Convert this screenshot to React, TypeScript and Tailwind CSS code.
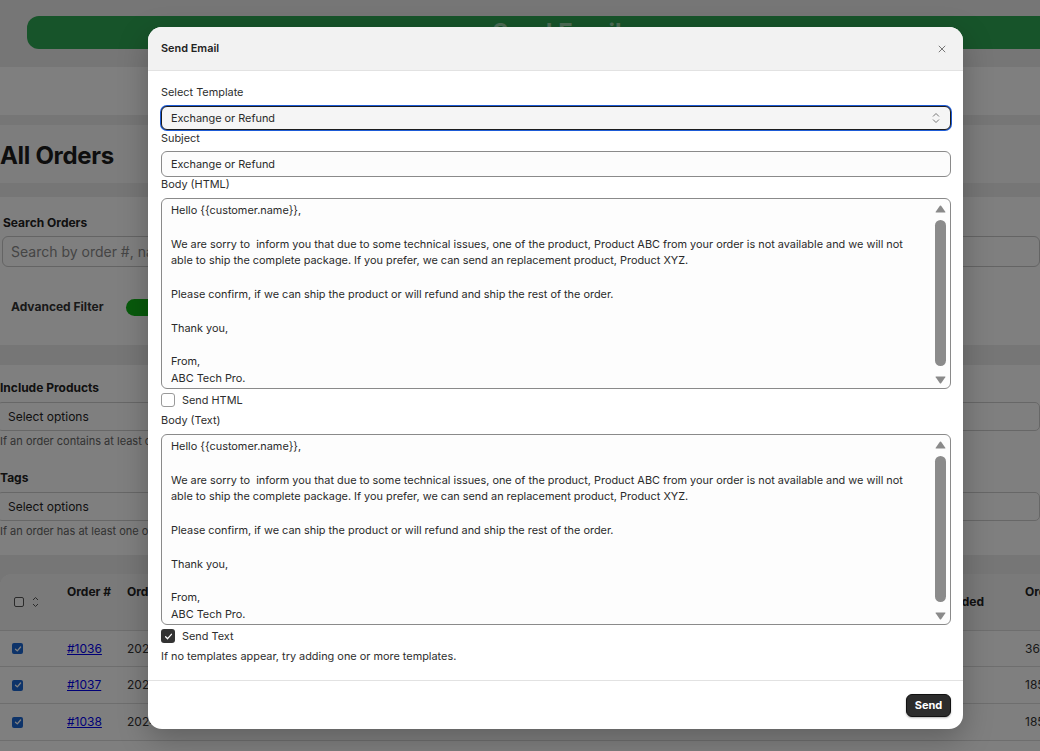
import React from "react";

const BODY = `Hello {{customer.name}},

We are sorry to  inform you that due to some technical issues, one of the product, Product ABC from your order is not available and we will not
able to ship the complete package. If you prefer, we can send an replacement product, Product XYZ.

Please confirm, if we can ship the product or will refund and ship the rest of the order.

Thank you,

From,
ABC Tech Pro.`;

function Tri({ down }: { down?: boolean }) {
  return (
    <svg width="11" height="8" viewBox="0 0 11 8" className="block">
      {down ? (
        <path d="M1 0.5 H10 Q10.8 0.5 10.3 1.3 L6.1 7.2 Q5.5 8 4.9 7.2 L0.7 1.3 Q0.2 0.5 1 0.5Z" fill="#8a8a8a" />
      ) : (
        <path d="M1 7.5 H10 Q10.8 7.5 10.3 6.7 L6.1 0.8 Q5.5 0 4.9 0.8 L0.7 6.7 Q0.2 7.5 1 7.5Z" fill="#8a8a8a" />
      )}
    </svg>
  );
}

function BodyBox() {
  return (
    <div className="flex h-[191px] overflow-hidden rounded-[6px] border border-[#8a8a8a] bg-[#fdfdfd]">
      <textarea
        readOnly
        wrap="off"
        value={BODY}
        className="flex-1 resize-none overflow-hidden bg-transparent pl-[9px] pt-[3px] text-[10.9px] leading-[16.8px] text-[#2a2a2a] outline-none"
      />
      <div className="mr-[3px] flex w-[13px] flex-col items-center pt-[6px] pb-[4px]">
        <Tri />
        <div className="mt-[7px] mb-[10px] w-[11px] flex-1 rounded-full bg-[#8b8b8b]" />
        <Tri down />
      </div>
    </div>
  );
}

function Check({ checked }: { checked?: boolean }) {
  return checked ? (
    <div className="flex h-[14px] w-[14px] items-center justify-center rounded-[3px] bg-[#333333]">
      <svg width="9" height="9" viewBox="0 0 9 9">
        <path d="M1.6 4.8 L3.6 6.7 L7.4 2.3" stroke="white" strokeWidth="1.3" fill="none" strokeLinecap="round" strokeLinejoin="round" />
      </svg>
    </div>
  ) : (
    <div className="h-[14px] w-[14px] rounded-[3px] border border-[#9a9a9a] bg-white" />
  );
}

function SmallBox({ checked }: { checked?: boolean }) {
  return checked ? (
    <div className="flex h-[11px] w-[11px] items-center justify-center rounded-[2px] bg-[#1a66d2]">
      <svg width="8" height="8" viewBox="0 0 8 8">
        <path d="M1.5 4.2 L3.3 5.9 L6.6 2" stroke="white" strokeWidth="1.3" fill="none" strokeLinecap="round" strokeLinejoin="round" />
      </svg>
    </div>
  ) : (
    <div className="h-[10px] w-[10px] rounded-[2px] border border-[#555] bg-white" />
  );
}

function Label({ children, className = "" }: { children: React.ReactNode; className?: string }) {
  return <div className={`h-[15px] text-[10.9px] leading-[15px] text-[#2e2e2e] ${className}`}>{children}</div>;
}

function Row({ id, right, h }: { id: string; right: string; h: string }) {
  return (
    <div className={`flex items-center border-b border-[#dcdcdc] text-[12px] text-[#333] ${h}`}>
      <div className="w-[67px] pl-[12px]">
        <SmallBox checked />
      </div>
      <div className="w-[60px]">
        <a href="#" className="text-[#0000ee] underline">
          {id}
        </a>
      </div>
      <div className="flex-1">2024-10-12</div>
      <div className="w-[95px]">No</div>
      <div className="w-[15px] shrink-0 whitespace-nowrap">{right}</div>
    </div>
  );
}

export default function App() {
  return (
    <div className="relative h-[751px] w-[1040px] overflow-hidden bg-[#ececec] font-['Inter',sans-serif]">
      {/* background page */}
      <div className="flex flex-col">
        <div className="pt-[16px]">
          <div className="ml-[27px] flex h-[33px] w-[1060px] items-start justify-center rounded-[12px] bg-[#2ea854] pt-[3px]">
            <span className="text-[24px] font-bold leading-[28px] text-[#9ad8ab]">Send Email</span>
          </div>
        </div>
        <div className="mt-[18px] h-[48px] bg-white" />
        <div className="mt-[10px] flex h-[58px] items-center bg-[#fafafa] pt-[3px]">
          <h1 className="text-[24px] font-bold tracking-[-0.3px] text-[#1c1c1c]">All Orders</h1>
        </div>
        <div className="mt-[14px] h-[148px] bg-white pt-[19px]">
          <div className="pl-[3px] text-[12px] font-bold leading-[14px] text-[#222]">Search Orders</div>
          <div className="ml-[2px] mt-[6px] flex h-[31px] items-center rounded-[6px] border border-[#c8c8c8] bg-white pl-[8px] text-[14px] text-[#8a8a8a]">
            Search by order #, name, email
          </div>
          <div className="mt-[31px] flex items-center pl-[11px]">
            <span className="w-[115px] text-[12px] font-bold text-[#333]">Advanced Filter</span>
            <div className="h-[17px] w-[36px] rounded-full bg-[#10b418]" />
          </div>
        </div>
        <div className="mt-[20px] h-[190px] bg-white pt-[16px]">
          <div className="text-[12px] font-bold leading-[14px] text-[#222]">Include Products</div>
          <div className="-ml-[3px] mt-[7px] flex h-[29px] items-center rounded-[5px] border border-[#cfcfcf] pl-[10px] text-[12px] text-[#222]">
            Select options
          </div>
          <div className="mt-[3px] text-[11px] leading-[14px] text-[#666]">If an order contains at least one of the selected products</div>
          <div className="mt-[23px] text-[12px] font-bold leading-[14px] text-[#222]">Tags</div>
          <div className="-ml-[3px] mt-[7px] flex h-[29px] items-center rounded-[5px] border border-[#cfcfcf] pl-[10px] text-[12px] text-[#222]">
            Select options
          </div>
          <div className="mt-[3px] text-[11px] leading-[14px] text-[#666]">If an order has at least one of the selected tags</div>
        </div>
        <div className="mt-[19px] overflow-hidden rounded-tl-[12px] bg-white">
          <div className="flex h-[57px] border-b border-[#dcdcdc] bg-[#f4f4f4] text-[12px] font-bold text-[#222]">
            <div className="flex w-[67px] items-center gap-[8px] pl-[14px]">
              <SmallBox />
              <svg width="7" height="12" viewBox="0 0 7 12">
                <path d="M1 4 L3.5 1.5 L6 4 M1 8 L3.5 10.5 L6 8" stroke="#555" strokeWidth="1" fill="none" />
              </svg>
            </div>
            <div className="w-[60px] pt-[9px]">Order #</div>
            <div className="flex-1 pt-[9px] whitespace-nowrap">Order Date</div>
            <div className="flex w-[95px] items-center">Excluded</div>
            <div className="w-[15px] shrink-0 whitespace-nowrap pt-[9px]">Order Total</div>
          </div>
          <Row id="#1036" right="360.00" h="h-[36px]" />
          <Row id="#1037" right="185.00" h="h-[37px]" />
          <Row id="#1038" right="185.00" h="h-[37px]" />
          <div className="h-[37px]" />
        </div>
      </div>

      {/* overlay */}
      <div className="absolute inset-0 bg-black/50" />

      {/* modal */}
      <div className="absolute left-[148px] top-[27px] flex w-[815px] flex-col overflow-hidden rounded-[14px] bg-white shadow-[0_10px_30px_rgba(0,0,0,0.25)]">
        <div className="flex h-[44px] items-center justify-between border-b border-[#e2e2e2] bg-[#f2f2f2] pl-[13px] pr-[17px]">
          <span className="text-[10.9px] font-semibold text-[#222]">Send Email</span>
          <svg width="8" height="8" viewBox="0 0 8 8">
            <path d="M0.8 0.8 L7.2 7.2 M7.2 0.8 L0.8 7.2" stroke="#777" strokeWidth="1" />
          </svg>
        </div>
        <div className="flex flex-col pl-[13px] pr-[12px] pt-[14px] pb-[16px]">
          <Label className="mb-[5px]">Select Template</Label>
          <div className="my-[1px] flex h-[24px] items-center justify-between rounded-[6px] border-[1.5px] border-[#1c1c1c] bg-[#f5f5f5] pl-[9px] pr-[10px] text-[10.9px] text-[#2a2a2a] ring-1 ring-[#1d5bd6]">
            <span>Exchange or Refund</span>
            <svg width="8" height="12" viewBox="0 0 8 12">
              <path d="M1 4.5 L4 1.5 L7 4.5 M1 7.5 L4 10.5 L7 7.5" stroke="#777" strokeWidth="1" fill="none" />
            </svg>
          </div>
          <Label className="mb-[5px]">Subject</Label>
          <div className="flex h-[26px] items-center rounded-[6px] border border-[#8a8a8a] bg-[#fcfcfc] pl-[9px] text-[10.9px] text-[#2a2a2a]">
            Exchange or Refund
          </div>
          <Label className="mb-[6px]">Body (HTML)</Label>
          <BodyBox />
          <div className="mt-[3px] flex h-[16px] items-center gap-[7px]">
            <Check />
            <span className="text-[10.9px] text-[#2e2e2e]">Send HTML</span>
          </div>
          <Label className="mt-[5px] mb-[6px]">Body (Text)</Label>
          <BodyBox />
          <div className="mt-[3px] flex h-[16px] items-center gap-[7px]">
            <Check checked />
            <span className="text-[10.9px] text-[#2e2e2e]">Send Text</span>
          </div>
          <div className="mt-[5px] h-[15px] text-[10.9px] leading-[15px] text-[#2e2e2e]">
            If no templates appear, try adding one or more templates.
          </div>
        </div>
        <div className="flex justify-end border-t border-[#e2e2e2] pt-[13px] pb-[12px] pr-[12px]">
          <button className="h-[23px] w-[45px] rounded-[6px] border border-[#111] bg-[#2c2c2c] text-[11px] font-bold text-white shadow-[0_1px_2px_rgba(0,0,0,0.3)]">
            Send
          </button>
        </div>
      </div>
    </div>
  );
}
